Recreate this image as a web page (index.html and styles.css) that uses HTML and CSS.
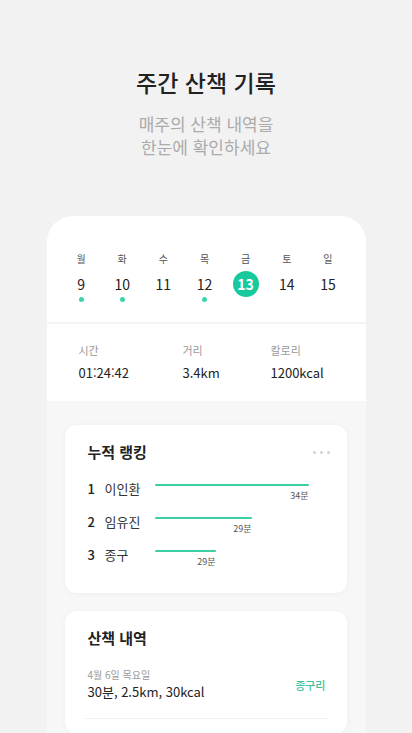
FILE: index.html
```html
<!DOCTYPE html>
<html lang="ko">
<head>
  <meta charset="UTF-8" />
  <title>주간 산책 기록</title>
  <meta name="viewport" content="width=device-width, initial-scale=1.0" />
  <link rel="stylesheet" href="styles.css">
</head>
<body>

  <header class="intro">
    <h1>주간 산책 기록</h1>
    <p class="subtitle">매주의 산책 내역을<br>한눈에 확인하세요</p>
  </header>

  <main class="sheet">
    <section class="week">
      <div class="day"><span class="dow">월</span><span class="date">9</span><span class="dot"></span></div>
      <div class="day"><span class="dow">화</span><span class="date">10</span><span class="dot"></span></div>
      <div class="day"><span class="dow">수</span><span class="date">11</span><span class="dot off"></span></div>
      <div class="day"><span class="dow">목</span><span class="date">12</span><span class="dot"></span></div>
      <div class="day"><span class="dow">금</span><span class="date today">13</span><span class="dot off"></span></div>
      <div class="day"><span class="dow">토</span><span class="date">14</span><span class="dot off"></span></div>
      <div class="day"><span class="dow">일</span><span class="date">15</span><span class="dot off"></span></div>
    </section>

    <section class="stats">
      <div class="stat">
        <span class="stat-label">시간</span>
        <span class="stat-value">01:24:42</span>
      </div>
      <div class="stat">
        <span class="stat-label">거리</span>
        <span class="stat-value">3.4km</span>
      </div>
      <div class="stat">
        <span class="stat-label">칼로리</span>
        <span class="stat-value">1200kcal</span>
      </div>
    </section>

    <section class="panels">
      <div class="panel">
        <div class="panel-head">
          <h3>누적 랭킹</h3>
          <span class="more"><i></i><i></i><i></i></span>
        </div>
        <ol class="ranking">
          <li class="rank-row">
            <span class="rank">1</span>
            <span class="name">이인환</span>
            <div class="bar-wrap" style="width: 154px">
              <div class="bar"></div>
              <span class="bar-label">34분</span>
            </div>
          </li>
          <li class="rank-row">
            <span class="rank">2</span>
            <span class="name">임유진</span>
            <div class="bar-wrap" style="width: 97px">
              <div class="bar"></div>
              <span class="bar-label">29분</span>
            </div>
          </li>
          <li class="rank-row">
            <span class="rank">3</span>
            <span class="name">종구</span>
            <div class="bar-wrap" style="width: 61px">
              <div class="bar"></div>
              <span class="bar-label">29분</span>
            </div>
          </li>
        </ol>
      </div>

      <div class="panel">
        <div class="panel-head">
          <h3>산책 내역</h3>
        </div>
        <ul class="history">
          <li class="walk">
            <div class="walk-info">
              <span class="walk-date">4월 6일 목요일</span>
              <span class="walk-summary">30분, 2.5km, 30kcal</span>
            </div>
            <span class="walk-dog">종구리</span>
          </li>
        </ul>
      </div>
    </section>
  </main>

</body>
</html>
```

FILE: styles.css
```css
html, body {
  margin: 0;
  padding: 0;
  height: 100%;
  overflow: hidden;
  font-family: 'Noto Sans CJK KR', 'Noto Sans', sans-serif;
  background: #f2f2f2;
  color: #222;
}

.intro {
  text-align: center;
  padding-top: 66px;
}

h1 {
  font-size: 23px;
  font-weight: 500;
  line-height: 32px;
  color: #222;
  margin: 0;
}

p.subtitle {
  font-size: 17px;
  line-height: 23px;
  color: #ababab;
  margin: 14px 0 0 0;
}

.sheet {
  width: 319px;
  margin: 58px auto 0 auto;
  background: #fff;
  border-radius: 26px 26px 0 0;
  overflow: hidden;
}

/* week calendar */
.week {
  display: grid;
  grid-template-columns: repeat(7, 1fr);
  padding: 36px 17px 20px 14px;
  border-bottom: 2px solid #f4f4f4;
}

.day {
  display: flex;
  flex-direction: column;
  align-items: center;
}

.dow {
  font-size: 10px;
  line-height: 14px;
  color: #555;
}

.date {
  margin-top: 5px;
  width: 26px;
  height: 26px;
  line-height: 26px;
  text-align: center;
  font-size: 14px;
  color: #222;
}

.date.today {
  background: #17c99c;
  color: #fff;
  border-radius: 50%;
  font-weight: 700;
}

.dot {
  width: 5px;
  height: 5px;
  border-radius: 50%;
  background: #3fd3ac;
}

.dot.off {
  visibility: hidden;
}

/* totals */
.stats {
  display: grid;
  grid-template-columns: 104px 88px 1fr;
  padding: 18px 0 18px 32px;
}

.stat {
  display: flex;
  flex-direction: column;
}

.stat-label {
  font-size: 11px;
  line-height: 16px;
  color: #999;
}

.stat-value {
  margin-top: 5px;
  font-size: 13px;
  line-height: 20px;
  color: #222;
}

/* panels */
.panels {
  background: #f7f7f7;
  padding: 24px 19px 40px 18px;
  display: flex;
  flex-direction: column;
  gap: 18px;
}

.panel {
  background: #fff;
  border-radius: 12px;
  box-shadow: 0 1px 6px rgba(0, 0, 0, 0.04);
  padding: 16px 0 15px 0;
}

.panel-head {
  display: flex;
  align-items: center;
  justify-content: space-between;
  padding: 0 17px 0 23px;
}

h3 {
  font-size: 15px;
  font-weight: 700;
  line-height: 22px;
  margin: 0;
}

.more {
  display: flex;
  gap: 4px;
}

.more i {
  width: 3px;
  height: 3px;
  border-radius: 50%;
  background: #d2d2d2;
}

.ranking {
  list-style: none;
  margin: 16px 0 0 0;
  padding: 0 0 0 23px;
}

.rank-row {
  display: flex;
  align-items: flex-start;
  height: 33px;
}

.rank {
  width: 17px;
  font-size: 13px;
  line-height: 20px;
  font-weight: 500;
}

.name {
  width: 50px;
  font-size: 13px;
  line-height: 20px;
  color: #333;
}

.bar-wrap {
  display: flex;
  flex-direction: column;
  padding-top: 5px;
}

.bar {
  height: 2px;
  background: #3ccfa6;
  border-radius: 1px;
}

.bar-label {
  margin-top: 4px;
  text-align: right;
  font-size: 9px;
  line-height: 12px;
  color: #555;
}

.history {
  list-style: none;
  margin: 18px 19px 0 20px;
  padding: 0;
}

.walk {
  display: flex;
  align-items: center;
  justify-content: space-between;
  padding: 0 2px 16px 3px;
  border-bottom: 1px solid #f0f0f0;
}

.walk-info {
  display: flex;
  flex-direction: column;
}

.walk-date {
  font-size: 10px;
  line-height: 15px;
  color: #999;
}

.walk-summary {
  font-size: 13px;
  line-height: 20px;
  color: #222;
}

.walk-dog {
  font-size: 11px;
  font-weight: 500;
  color: #3cc4a0;
}
```
